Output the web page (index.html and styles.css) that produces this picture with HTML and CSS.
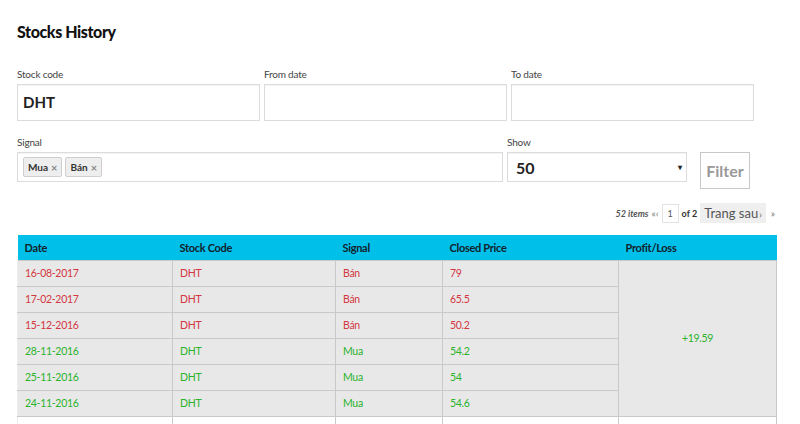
FILE: index.html
```html
<!DOCTYPE html>
<html lang="vi">
<head>
    <meta charset="UTF-8">
    <meta name="viewport" content="width=device-width, initial-scale=1.0">
    <title>Stocks History</title>
    <link rel="stylesheet" href="styles.css">
</head>
<body>
    <div class="container">
        <h1>Stocks History</h1>

        <div class="row-dates">
            <div class="field">
                <label>Stock code</label>
                <div class="input big">DHT</div>
            </div>
            <div class="field">
                <label>From date</label>
                <div class="input big"></div>
            </div>
            <div class="field">
                <label>To date</label>
                <div class="input big"></div>
            </div>
        </div>

        <div class="row-signal">
            <div class="field">
                <label>Signal</label>
                <div class="input tags">
                    <span class="tag">Mua <span class="x">&times;</span></span>
                    <span class="tag">Bán <span class="x">&times;</span></span>
                </div>
            </div>
            <div class="field">
                <label>Show</label>
                <div class="input select">50 <span class="caret">&#9662;</span></div>
            </div>
            <button class="filter">Filter</button>
        </div>

        <div class="pager">
            <span class="count">52 items</span>
            <span class="arrows">&laquo;&lsaquo;</span>
            <span class="page">1</span>
            <span class="of">of 2</span>
            <span class="next">Trang sau<small>&rsaquo;</small></span>
            <span class="arrows last">&raquo;</span>
        </div>

        <table class="history">
            <thead>
                <tr>
                    <th class="c-date">Date</th>
                    <th class="c-code">Stock Code</th>
                    <th class="c-signal">Signal</th>
                    <th class="c-price">Closed Price</th>
                    <th class="c-pl">Profit/Loss</th>
                </tr>
            </thead>
            <tbody>
                <tr class="sell">
                    <td>16-08-2017</td><td>DHT</td><td>Bán</td><td>79</td>
                    <td class="pl" rowspan="6">+19.59</td>
                </tr>
                <tr class="sell"><td>17-02-2017</td><td>DHT</td><td>Bán</td><td>65.5</td></tr>
                <tr class="sell"><td>15-12-2016</td><td>DHT</td><td>Bán</td><td>50.2</td></tr>
                <tr class="buy"><td>28-11-2016</td><td>DHT</td><td>Mua</td><td>54.2</td></tr>
                <tr class="buy"><td>25-11-2016</td><td>DHT</td><td>Mua</td><td>54</td></tr>
                <tr class="buy"><td>24-11-2016</td><td>DHT</td><td>Mua</td><td>54.6</td></tr>
                <tr class="blank"><td></td><td></td><td></td><td></td><td></td></tr>
            </tbody>
        </table>
    </div>
</body>
</html>
```

FILE: styles.css
```css
body {
    margin: 0;
    background: #fff;
    font-family: Lato, "Open Sans", sans-serif;
    color: #222;
    overflow: hidden;
}
.container {
    padding: 22px 0 0 17px;
    width: 760px;
}
h1 {
    margin: 0;
    font-size: 16px;
    line-height: 20px;
    font-weight: 900;
    letter-spacing: -0.4px;
    color: #111;
}
label {
    display: block;
    font-size: 10px;
    line-height: 12px;
    color: #444;
    margin-bottom: 4px;
    letter-spacing: -0.2px;
}
.row-dates {
    display: grid;
    grid-template-columns: 243px 243px 243px;
    column-gap: 4px;
    margin-top: 26px;
}
.input {
    box-sizing: border-box;
    border: 1px solid #dcdcdc;
    box-shadow: inset 0 1px 1px rgba(0, 0, 0, 0.05);
    background: #fff;
}
.input.big {
    height: 37px;
    padding: 0 5px;
    font-size: 15px;
    font-weight: 700;
    line-height: 35px;
    color: #222;
}
.row-signal {
    display: grid;
    grid-template-columns: 486px 180px 50px;
    column-gap: 4px;
    align-items: start;
    margin-top: 15px;
}
.input.tags {
    height: 30px;
    display: flex;
    align-items: center;
    gap: 3px;
    padding: 0 5px;
}
.tag {
    display: inline-flex;
    align-items: center;
    gap: 3px;
    height: 18px;
    padding: 0 4px;
    border: 1px solid #cfcfcf;
    background: #eee;
    border-radius: 2px;
    font-size: 10px;
    font-weight: 700;
    color: #333;
}
.tag .x {
    color: #888;
    font-weight: 700;
    font-size: 11px;
}
.input.select {
    height: 30px;
    display: flex;
    align-items: center;
    justify-content: space-between;
    padding: 0 4px 0 8px;
    font-size: 16px;
    font-weight: 700;
    color: #222;
}
.caret {
    font-size: 8px;
    color: #222;
}
.filter {
    margin-top: 16px;
    margin-left: 9px;
    width: 50px;
    height: 37px;
    border: 1px solid #c8c8c8;
    background: #fff;
    font-family: inherit;
    font-size: 16px;
    font-weight: 700;
    color: #999;
    padding: 0;
}
.pager {
    display: flex;
    justify-content: flex-end;
    align-items: center;
    gap: 3px;
    height: 22px;
    margin-top: 13px;
    padding-right: 2px;
    font-size: 9px;
    color: #555;
}
.count {
    font-style: italic;
    font-weight: 700;
}
.arrows {
    font-size: 10px;
    color: #777;
}
.arrows.last {
    margin-left: 2px;
}
.page {
    box-sizing: border-box;
    width: 17px;
    height: 19px;
    border: 1px solid #e2e2e2;
    text-align: center;
    line-height: 17px;
    font-size: 9px;
}
.of {
    font-weight: 700;
    color: #333;
}
.next {
    background: #efefef;
    padding: 0 4px;
    height: 20px;
    line-height: 20px;
    font-size: 13px;
    color: #555;
}
.next small {
    font-size: 9px;
    margin-left: 1px;
}
.history {
    margin-top: 11px;
    width: 759px;
    border-collapse: collapse;
    table-layout: fixed;
    font-size: 10.5px;
    letter-spacing: -0.3px;
}
.history th {
    box-sizing: border-box;
    background: #00bfe9;
    color: #13222c;
    font-size: 11px;
    font-weight: 700;
    text-align: left;
    height: 25px;
    padding: 0 7px;
}
.c-date { width: 155px; }
.c-code { width: 163px; }
.c-signal { width: 107px; }
.c-price { width: 176px; }
.c-pl { width: 158px; }
.history td {
    background: #e8e8e8;
    border: 1px solid #c9c9c9;
    height: 25px;
    padding: 0 7px;
}
.history td:first-child {
    border-left: 1px solid #eee;
}
.sell td { color: #d3373f; }
.buy td { color: #2bb32b; }
.history td.pl {
    text-align: center;
    color: #2bb32b;
}
.blank td {
    background: #fff;
}
```
